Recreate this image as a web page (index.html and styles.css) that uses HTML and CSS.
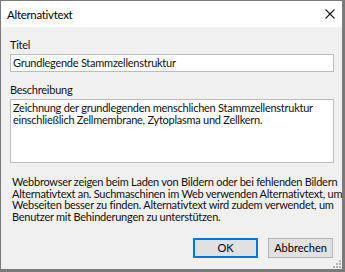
FILE: index.html
```html
<!DOCTYPE html>
<html lang="de">
<head>
<meta charset="utf-8">
<link rel="stylesheet" href="styles.css">
</head>
<body>
<div class="window">
  <div class="titlebar">
    <span class="title">Alternativtext</span>
    <svg class="close" width="10" height="10" viewBox="0 0 10 10"><path d="M0.5 0.5L9.5 9.5M9.5 0.5L0.5 9.5" stroke="#1a1a1a" stroke-width="1.1" fill="none"/></svg>
  </div>
  <div class="content">
    <label class="label">Titel</label>
    <div class="input">Grundlegende Stammzellenstruktur</div>
    <label class="label label-gap">Beschreibung</label>
    <div class="textarea">Zeichnung der grundlegenden menschlichen Stammzellenstruktur<br>einschließlich Zellmembrane, Zytoplasma und Zellkern.</div>
    <p class="info">Webbrowser zeigen beim Laden von Bildern oder bei fehlenden Bildern<br>Alternativtext an. Suchmaschinen im Web verwenden Alternativtext, um<br>Webseiten besser zu finden. Alternativtext wird zudem verwendet, um<br>Benutzer mit Behinderungen zu unterstützen.</p>
    <div class="buttons">
      <button class="btn btn-default">OK</button>
      <button class="btn">Abbrechen</button>
    </div>
    <svg class="grip" width="8" height="8" viewBox="0 0 8 8" fill="#b0b0b0"><rect x="6" y="0" width="2" height="2"/><rect x="3" y="3" width="2" height="2"/><rect x="6" y="3" width="2" height="2"/><rect x="0" y="6" width="2" height="2"/><rect x="3" y="6" width="2" height="2"/><rect x="6" y="6" width="2" height="2"/></svg>
  </div>
</div>
</body>
</html>
```
FILE: styles.css
```css
* { box-sizing: border-box; }
html, body { margin: 0; padding: 0; }
body {
  font-family: Lato, "Open Sans", sans-serif;
  font-size: 11px;
  letter-spacing: -0.25px;
  color: #111;
}
.window {
  width: 345px;
  height: 272px;
  border-style: solid;
  border-color: #7a7a7a;
  border-width: 1px 3px 3px 1px;
  display: flex;
  flex-direction: column;
  background: #f0f0f0;
  overflow: hidden;
}
.titlebar {
  height: 26px;
  background: #fff;
  display: flex;
  align-items: center;
  justify-content: space-between;
  padding: 0 7px 0 6px;
  flex: none;
}
.title { font-size: 11.5px; letter-spacing: -0.3px; color: #000; }
.close { display: block; }
.content {
  flex: 1;
  position: relative;
  padding: 11px 8px 0 9px;
  display: flex;
  flex-direction: column;
  white-space: nowrap;
}
.label { display: block; line-height: 14px; height: 14px; margin-bottom: 2px; }
.label-gap { margin-top: 11px; }
.input {
  height: 18px;
  background: #fff;
  border: 1px solid #bcbcbc;
  padding: 0 2px;
  line-height: 16px;
}
.textarea {
  height: 64px;
  background: #fff;
  border: 1px solid #bcbcbc;
  padding: 2px 2px;
  line-height: 12px;
}
.info {
  margin: 13px 0 0 2px;
  line-height: 11.7px;
}
.buttons {
  display: flex;
  justify-content: flex-end;
  gap: 10px;
  margin-top: 15px;
  padding-right: 1px;
}
.btn {
  width: 65px;
  height: 20px;
  font: inherit;
  color: #000;
  background: #e1e1e1;
  border: 1px solid #b4b4b4;
  padding: 0;
}
.btn-default { border: 2px solid #0078d7; }
.grip { position: absolute; right: 1px; bottom: 1px; }
```
